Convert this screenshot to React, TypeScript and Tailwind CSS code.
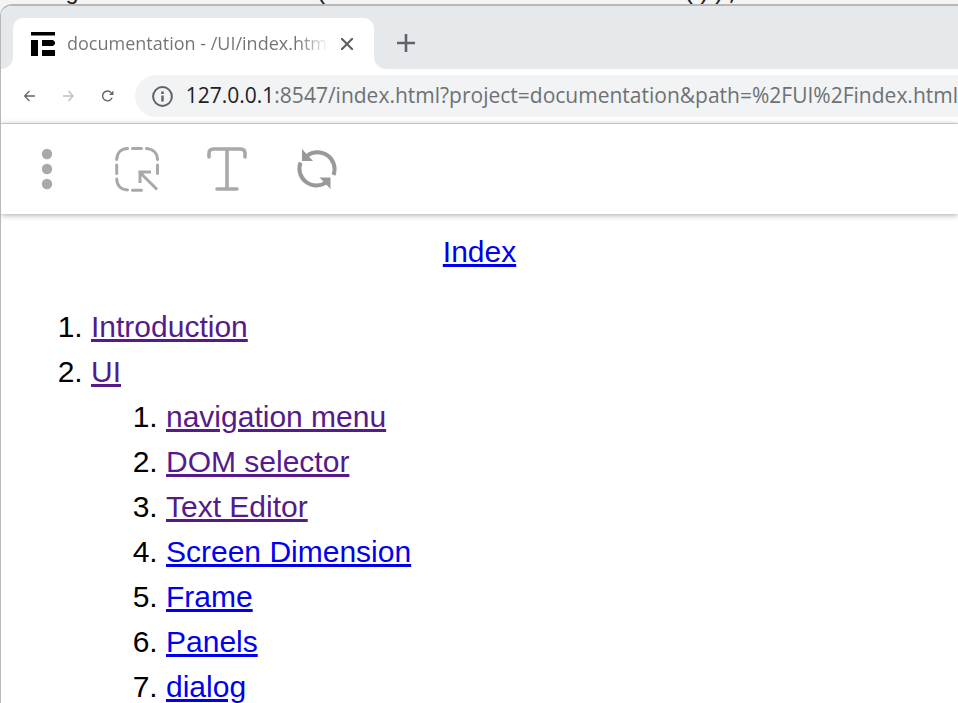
import React from "react";

const visited = "text-[#551a8b]";
const fresh = "text-[#0000ee]";

const nested: [string, string][] = [
  ["navigation menu", visited],
  ["DOM selector", visited],
  ["Text Editor", visited],
  ["Screen Dimension", fresh],
  ["Frame", fresh],
  ["Panels", fresh],
  ["dialog", fresh],
];

function Link({ label, tone }: { label: string; tone: string }) {
  return <a className={`underline ${tone}`}>{label}</a>;
}

function Favicon() {
  return (
    <svg className="h-6 w-6 shrink-0" viewBox="0 0 24 24" fill="#000">
      <path d="M0 0h24v3.5H0zM0 8h7v16H0zM11 8h11l2 2v2l-2 2H11zM11 18h13v6H11z" />
    </svg>
  );
}

export default function App() {
  return (
    <div className="relative h-[703px] w-[958px] overflow-hidden bg-[#f4f4f4]">
      <div className="h-[5px] overflow-visible whitespace-pre font-['Liberation_Mono',monospace] text-[24.5px] leading-[24px] text-[#222]">
        <div className="-mt-[19px] pl-[35px]">cogceet.fromEntries(urlSearchParamsToEntries());</div>
      </div>
      <div className="absolute inset-x-0 bottom-0 top-1 flex flex-col overflow-hidden rounded-tl-[12px] border-l border-t-2 border-[#b8b8b8] bg-white">
        <div className="flex h-[63px] shrink-0 bg-[#e6e9ec]">
          <div className="h-full w-3 bg-white"><div className="h-full rounded-br-[12px] bg-[#e6e9ec]" /></div>
          <div className="mt-3 flex w-[361px] items-center rounded-t-[10px] bg-white pl-[18px]">
            <Favicon />
            <div className="ml-3 w-[262px] overflow-hidden whitespace-nowrap bg-gradient-to-r from-[#707477] from-[88%] to-transparent bg-clip-text font-['Open_Sans',sans-serif] text-[18px] text-transparent">documentation - /UI/index.html - </div>
            <svg className="ml-3 h-3 w-3 shrink-0" viewBox="0 0 12 12" stroke="#5f6368" strokeWidth="2.2"><path d="M0 0l12 12M12 0L0 12" /></svg>
          </div>
          <div className="h-full flex-1 bg-white">
            <div className="flex h-full items-center rounded-bl-[12px] bg-[#e6e9ec] pl-[23px] pt-[11px]">
              <svg className="h-[18px] w-[18px]" viewBox="0 0 18 18" stroke="#5f6368" strokeWidth="2.6"><path d="M9 0v18M0 9h18" /></svg>
            </div>
          </div>
        </div>
        <div className="flex h-[55px] shrink-0 items-center border-b border-[#d9dbdd] pl-[23px]">
          <svg className="h-5 w-5" viewBox="0 0 20 20" fill="none" stroke="#5f6368" strokeWidth="2.3"><path d="M20 10H1.5M10 .8L1.3 10l8.7 9.2" /></svg>
          <svg className="ml-7 h-5 w-5" viewBox="0 0 20 20" fill="none" stroke="#bbbdbf" strokeWidth="2.3"><path d="M0 10h18.5M10 .8l8.7 9.2-8.7 9.2" /></svg>
          <svg className="ml-7 h-[22px] w-[22px]" viewBox="0 0 22 22" fill="none" stroke="#5f6368" strokeWidth="2.5"><path d="M18.6 14A9 9 0 1 1 17 5" /><path d="M21 1v8h-8z" fill="#5f6368" stroke="none" /></svg>
          <div className="ml-[21px] flex h-[42px] flex-1 items-center bg-[#f1f3f4] rounded-l-[21px] pl-[17px]">
            <svg className="h-[21px] w-[21px] shrink-0" viewBox="0 0 21 21" fill="none" stroke="#5f6368" strokeWidth="2"><circle cx="10.5" cy="10.5" r="9.4" /><path d="M10.5 9.5v6" strokeWidth="2.4" /><path d="M10.5 5.5v2.4" strokeWidth="2.6" /></svg>
            <span className="ml-[13px] whitespace-nowrap font-['Open_Sans',sans-serif] text-[21px] text-[#6d7174]"><span className="text-[#202124]">127.0.0.1</span>:8547/index.html?project=documentation&amp;path=%2FUI%2Findex.html</span>
          </div>
        </div>
        <div className="flex h-[90px] shrink-0 items-center bg-white shadow-[0_1px_6px_rgba(0,0,0,0.35)]">
          <svg className="ml-[40px] h-[42px] w-3" viewBox="0 0 12 42" fill="#a9a9a9"><circle cx="6" cy="6" r="5.2" /><circle cx="6" cy="21" r="5.2" /><circle cx="6" cy="36" r="5.2" /></svg>
          <svg className="ml-[60px] h-[48px] w-[48px]" viewBox="0 0 48 48" fill="none" stroke="#a9a9a9" strokeWidth="3" strokeLinecap="round"><path d="M3.7 14.5C4 8 8 3.7 14.5 3.5M19.5 3.5h9M33.5 3.5C40 4 44.3 8 44.5 14.5M44.5 20v8.5M3.7 20v8.5M3.7 34C4 40.500 8 44.500 14.500 45M19.500 45.200h9" /><path d="M43 43.500L27 27.500M27 36.500v-9.500h9.500" strokeLinecap="square" /></svg>
          <svg className="ml-[45px] h-[46px] w-[42px]" viewBox="0 0 42 46" fill="none" stroke="#a9a9a9" strokeWidth="3.6" strokeLinecap="round"><path d="M3 11V7.500Q3 3 7.500 3h27Q39 3 39 7.500V11M21 3v40M11 43h20" /></svg>
          <svg className="ml-[48px] h-[42px] w-[42px]" viewBox="0 0 42 42" fill="none" stroke="#999a98" strokeWidth="4"><path d="M11 7.800A17 17 0 0 1 37.500 27M31 33.800A17 17 0 0 1 4.500 14.500" /><path d="M6 1v12h11zM34.500 41V29.500H23.500z" fill="#999a98" stroke="none" /></svg>
        </div>
        <main className="flex-1 font-['Liberation_Sans',Arial,sans-serif] text-[30px] leading-[45px] text-black">
          <div className="mt-[15px] text-center"><Link label="Index" tone={fresh} /></div>
          <ol className="mt-[30px] list-decimal pl-[90px]">
            <li><Link label="Introduction" tone={visited} /></li>
            <li>
              <Link label="UI" tone={visited} />
              <ol className="list-decimal pl-[75px]">
                {nested.map(([label, tone]) => <li key={label}><Link label={label} tone={tone} /></li>)}
              </ol>
            </li>
          </ol>
        </main>
      </div>
    </div>
  );
}
